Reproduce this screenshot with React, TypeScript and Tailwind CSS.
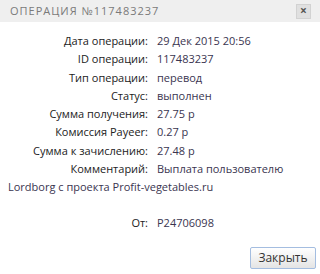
import React from 'react';

const rows: { label: string; value: string }[] = [
    { label: 'Дата операции:', value: '29 Дек 2015 20:56' },
    { label: 'ID операции:', value: '117483237' },
    { label: 'Тип операции:', value: 'перевод' },
    { label: 'Статус:', value: 'выполнен' },
    { label: 'Сумма получения:', value: '27.75 р' },
    { label: 'Комиссия Payeer:', value: '0.27 р' },
    { label: 'Сумма к зачислению:', value: '27.48 р' },
    { label: 'Комментарий:', value: 'Выплата пользователю' },
];

const Row: React.FC<{ label: string; value: string }> = ({ label, value }) => (
    <div className="leading-[18.3px]">
        <span className="inline-block w-[140px] text-right text-[#222] mr-[9px]">{label}</span>
        <span className="text-[#3a3550]">{value}</span>
    </div>
);

export default function App() {
    return (
        <div className="w-[320px] h-[274px] bg-white overflow-hidden" style={{ fontFamily: '"Open Sans", "Liberation Sans", sans-serif' }}>
            <div className="h-[22px] bg-[#efefef] flex items-center justify-between pl-[10px] pr-[9px]">
                <span className="text-[11px] tracking-[1px] text-[#7a7a7a] uppercase">Операция №117483237</span>
                <button className="w-[15px] h-[15px] bg-[#e0e0e0] border border-[#d2d2d2] flex items-center justify-center text-[#555] text-[12px] font-bold leading-none">
                    ×
                </button>
            </div>
            <div className="pt-[10px] pl-[8px] pr-2 text-[11px]">
                {rows.map(r => (
                    <Row key={r.label} label={r.label} value={r.value} />
                ))}
                {/* comment continues on its own line */}
                <div className="leading-[18.3px] text-[#3a3550]">Lordborg с проекта Profit-vegetables.ru</div>
                <div className="mt-[17px]">
                    <Row label="От:" value="P24706098" />
                </div>
            </div>
            <div className="flex justify-end pr-[4px] mt-[15px]">
                <button className="w-[66px] h-[22px] border border-[#a4bde0] rounded-[2px] bg-gradient-to-b from-white to-[#e4e4e4] text-[12px] text-[#333]">
                    Закрыть
                </button>
            </div>
        </div>
    );
}
